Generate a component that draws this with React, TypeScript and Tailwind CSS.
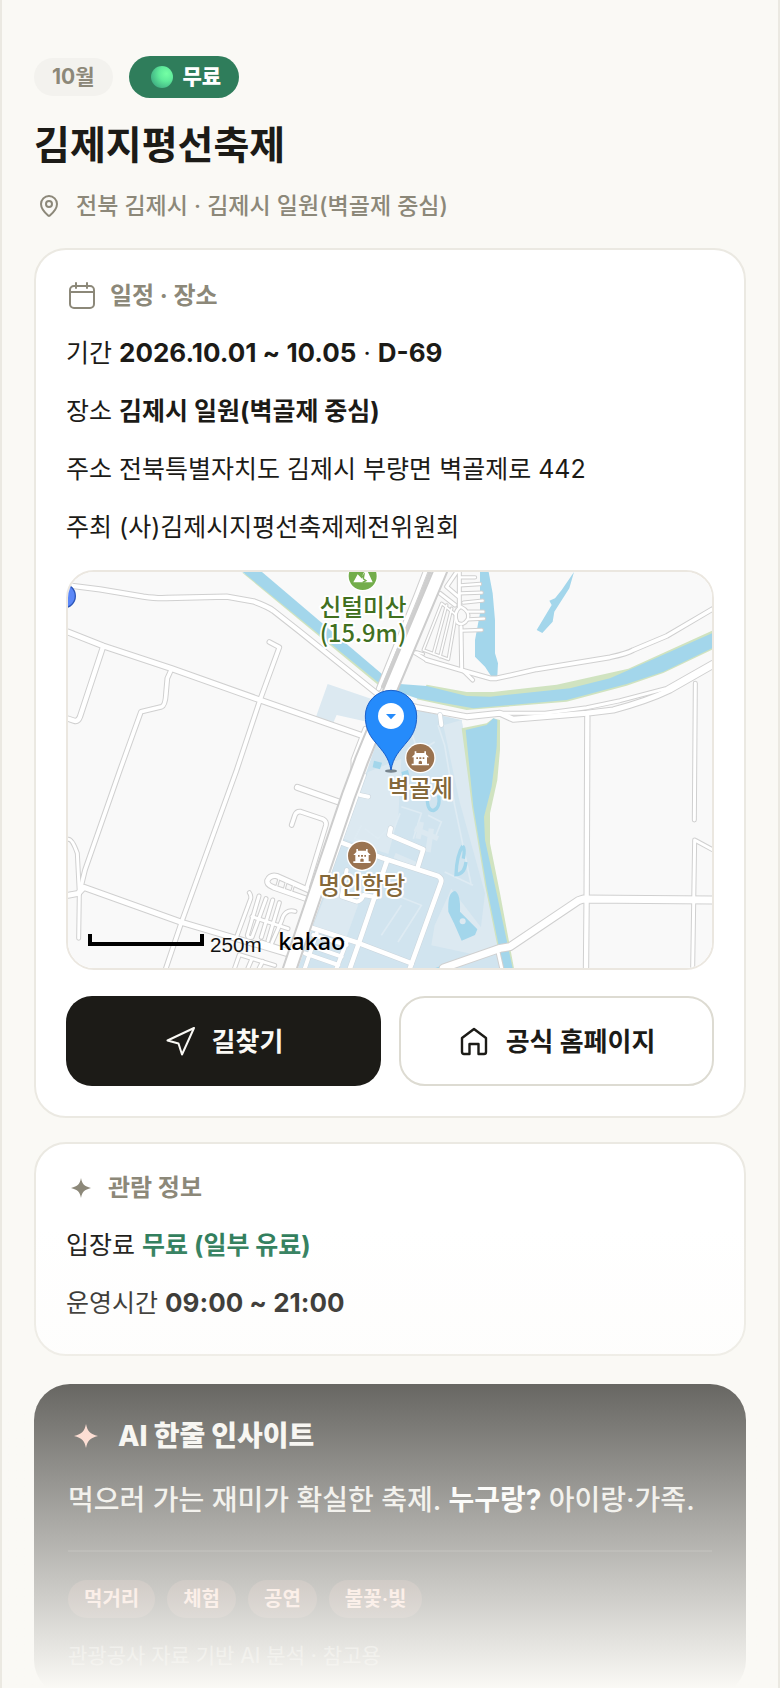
import { MapPin } from "lucide-react";

type Road = { d: string; w: number };

/* ================= MAP DATA ================= */

const lightRoads: Road[] = [
  { d: "M0 40L96 52L226 74Q270 80 296 78L476 74L556 88Q600 104 616 116L696 179L936 372", w: 18 },
  { d: "M106 222L36 434Q30 450 18 446L0 440", w: 18 },
  { d: "M311 290L298 319L294 364Q292 400 281 404L219 419L156 594L51 894L34 964", w: 16 },
  { d: "M604 210L634 226L576 384L506 594L341 1049L294 1188", w: 16 },
  { d: "M0 802Q12 798 28 844L34 964L32 1099", w: 14 },
  { d: "M0 180L106 222L311 290L576 384L886 492", w: 20 },
  { d: "M0 970L31 964L48 946L341 1051L676 1150", w: 20 },
  { d: "M688 646L818 692", w: 20 },
  { d: "M671 759L681 729Q686 717 698 719L766 742Q776 748 774 759L716 949", w: 16 },
  { d: "M721 954L626 912Q606 908 598 926Q596 938 616 946L736 988", w: 18 },
  { d: "M634 916L626 944M656 926L648 954M678 936L670 962", w: 8 },
  { d: "M544 962Q550 970 548 980L506 1094M573 972L538 1090Q540 1098 552 1096L594 980M614 984L580 1096M634 992L600 1106M681 1018Q650 1010 641 1046L612 1112", w: 14 },
  { d: "M552 1034L660 1070M580 1110L690 1146M500 1188L514 1148L620 1180M540 1188L552 1160M574 1188L584 1168", w: 14 },
  { d: "M1076 264L1186 296L1266 319L1286 319L1406 292L1626 256Q1680 244 1696 234L1796 192L1932 112", w: 16 },
  { d: "M1036 239L1076 264M1186 296L1214 324M1179 164L1181 289", w: 14 },
  { d: "M1174 0L1174 104M1166 0L1136 44L1171 74M1116 64L1161 99", w: 14 },
  { d: "M1176 16L1221 16M1176 40L1236 36M1176 64L1241 62M1186 92L1244 86M1201 119L1246 119M1201 142L1248 140M1181 176L1241 174", w: 12 },
  { d: "M1178 104Q1206 118 1200 140Q1186 164 1168 152Q1154 120 1178 104Z", w: 12 },
  { d: "M1121 94L1066 234L1141 262L1164 129ZM1136 99L1096 246M1151 109L1116 254M1066 246L1046 240", w: 10 },
  { d: "M980 390L1046 406L1196 434L1296 424L1336 442L1556 424L1636 414Q1740 386 1806 354L1932 282", w: 20 },
  { d: "M1296 424L1431 424L1556 407L1656 386L1796 349L1932 272", w: 14 },
  { d: "M1558 434L1556 964L1554 1188", w: 18 },
  { d: "M1882 334L1879 744", w: 14 },
  { d: "M1874 1188L1880 804L1932 832", w: 14 },
  { d: "M1291 1144L1301 1188", w: 14 },
  { d: "M1932 984L1546 981L1531 986L1326 1124L1296 1129L1126 1188", w: 26 },
  { d: "M1072 0L1045 70L932 350M892 470L856 564L856 600", w: 16 },
];

const parkRoads: Road[] = [
  { d: "M888 609L726 1064", w: 12 },
  { d: "M876 669L901 674", w: 12 },
  { d: "M821 812L946 859L1110 912Q1124 920 1118 934L1026 1188", w: 14 },
  { d: "M968 769L964 789L1066 832L1048 889", w: 14 },
  { d: "M958 864L874 1109L846 1189", w: 14 },
  { d: "M726 1066L874 1114L1031 1174", w: 14 },
  { d: "M836 894L821 974L866 989Q882 986 886 969L926 976", w: 12 },
  { d: "M736 1089L836 1119M721 1119L821 1154M711 1144L811 1179M746 1084L711 1188M836 1109L806 1188", w: 12 },
  { d: "M1116 428L1120 459", w: 12 },
];

const highway = "M1118 -6L971 344L881 564L841 672L664 1194";

const tags = ["먹거리", "체험", "공연", "불꽃·빛"];

/* ================= ICONS ================= */

function CalendarIcon() {
  return (
    <svg viewBox="0 0 32 32" className="size-8" fill="none" stroke="currentColor" strokeWidth="2" strokeLinecap="round">
      <rect x="4" y="6" width="24" height="22" rx="4" />
      <path d="M4 12H28M10 3V8M21 3V8" />
    </svg>
  );
}

function Sparkle({ className }: { className: string }) {
  return (
    <svg viewBox="0 0 24 24" className={className} fill="currentColor">
      <path d="M12 0C13.500 7.500 16 10 24 12C16 14 13.500 16.500 12 24C10.500 16.500 8 14 0 12C8 10 10.500 7.500 12 0Z" />
    </svg>
  );
}

function SendIcon() {
  return (
    <svg viewBox="0 0 32 32" className="size-8" fill="none" stroke="currentColor" strokeWidth="2" strokeLinejoin="round">
      <path d="M30 3L3.500 15.500L14.500 18.500L18 29.500Z" />
    </svg>
  );
}

function HomeIcon() {
  return (
    <svg viewBox="0 0 32 32" className="size-8" fill="none" stroke="currentColor" strokeWidth="2.400" strokeLinejoin="round">
      <path d="M4 13L16 4L28 13V27Q28 29 26 29H20.500V19H11.500V29H6Q4 29 4 27Z" />
    </svg>
  );
}

function PalaceBadge({ x, y }: { x: number; y: number }) {
  return (
    <g transform={`translate(${x} ${y})`}>
      <circle r="46" fill="#fff" />
      <circle r="42" fill="#9a7350" />
      <path d="M-26 -2L-17 -11V-20H-12V-15H12V-20H17V-11L26 -2ZM-20 -3H20V18H-20ZM-26 17H26V22H-26Z" fill="#fff" />
      <path d="M-12 -2h5v5h-5zM-3 -2h6v5h-6zM7 -2h5v5h-5zM-5 18V11Q0 6 5 11V18Z" fill="#9a7350" />
    </g>
  );
}

/* ================= MAP ================= */

function FestivalMap() {
  const label = {
    fontFamily: '"Noto Sans CJK KR", sans-serif',
    fontSize: 71,
    fontWeight: 500,
    textAnchor: "middle" as const,
    stroke: "#fff",
    strokeWidth: 12,
    strokeLinejoin: "round" as const,
    paintOrder: "stroke",
  };

  return (
    <svg viewBox="0 0 1932 1188" preserveAspectRatio="xMidYMid slice" className="block size-full" role="img" aria-label="지도">
      <rect width="1932" height="1188" fill="#f9f9f9" />

      {/* park */}
      <path d="M779 336L920 384L900 450L806 429L796 452L744 434Z" fill="#dce9f1" />
      <path d="M966 396L1181 444L1216 704L1310 1189H690Z" fill="#d1e4ef" />
      <path d="M900 600L1000 560L991 734L961 846L826 800ZM1126 460L1181 444L1216 704L1306 1150L1230 1140L1251 964L1175 690ZM736 1060L800 900L870 1000L830 1110ZM1100 1060L1150 950L1250 1080L1230 1150L1090 1120Z" fill="#dce9f1" />
      <path d="M1000 704L1060 724L1036 800M996 724L966 800M1110 460L1130 520L1160 700L1210 940M1030 480L1050 540L1100 510M960 960L1060 1000L990 1110M890 770L930 800L960 770M880 760L860 800L900 812M1000 1000L940 1090M1130 900L1215 940M1080 730L1120 750L1100 800" fill="none" stroke="#deebf3" strokeWidth="5" />
      <path d="M1040 770L1110 800M1060 750L1050 800M1090 770L1080 840M980 850L1050 880" fill="none" stroke="#dce9f1" strokeWidth="16" />

      {/* water */}
      <path d="M520 0L937 344L941 338L560 20Z" fill="#d0e3c0" />
      <path d="M524 0H582L956 318L941 340Z" fill="#a3d6eb" />
      <path d="M1076 338L1196 360L1276 360L1466 338L1681 290L1932 176V233L1786 303L1676 341L1496 389L1196 414L1046 382Z" fill="#d0e3c0" />
      <path d="M930 310L996 336L1076 342L1196 372L1266 374L1506 349L1626 319L1932 184V229L1786 299L1676 336L1496 384L1216 409L1046 379L960 350Z" fill="#a3d6eb" />
      <path d="M1236 0H1262L1274 64L1281 144V244L1290 274L1288 312H1269L1251 284L1221 254V204L1236 124Z" fill="#a3d6eb" />
      <path d="M1518 0L1481 54L1461 79L1444 86L1451 99L1406 174L1423 183L1454 149L1459 119L1504 49Z" fill="#a3d6eb" />
      <path d="M1181 469L1256 454L1276 439L1296 444V534L1288 624L1266 724V814L1296 964L1338 1189H1302L1252 944L1212 704Z" fill="#d0e3c0" />
      <path d="M1193 474L1256 459L1276 439L1288 444L1286 524L1271 644L1248 734L1251 804L1286 964L1334 1189H1306L1256 944L1216 704Z" fill="#a3d6eb" />
      <path d="M1161 957Q1178 966 1176 1019L1228 1072L1221 1089L1181 1106L1158 1054L1141 1019Q1138 960 1161 957Z" fill="#a3d6eb" />
      <path d="M1078 672Q1076 715 1096 716Q1118 708 1112 670M1184 822Q1166 850 1164 908Q1190 906 1194 870M1184 822Q1192 830 1186 860" fill="none" stroke="#a3d6eb" strokeWidth="10" />
      <path d="M918 566L942 572L936 592L914 586ZM1000 600L1020 594L1024 610L1004 616Z" fill="#a3d6eb" />
      <circle cx="1184" cy="1048" r="9" fill="#dce9f1" />
      <path d="M1100 1192L1292 1120" stroke="#a3d6eb" strokeWidth="6" />

      {/* roads */}
      <g fill="none" strokeLinecap="round" strokeLinejoin="round">
        {lightRoads.map((r) => (
          <path key={r.d} d={r.d} stroke="#d0d0d0" strokeWidth={r.w + 1} />
        ))}
        {lightRoads.map((r) => (
          <path key={r.d} d={r.d} stroke="#fff" strokeWidth={r.w - 5} />
        ))}
        {parkRoads.map((r) => (
          <path key={r.d} d={r.d} stroke="#cbd5dc" strokeWidth={r.w + 3} />
        ))}
        {parkRoads.map((r) => (
          <path key={r.d} d={r.d} stroke="#fff" strokeWidth={r.w} />
        ))}
        <path d="M1088 -6L1044 106L944 344" stroke="#cfcfcf" strokeWidth="10" />
        <path d={highway} stroke="#cdcdcd" strokeWidth="46" />
        <path d={highway} stroke="#fff" strokeWidth="34" />
      </g>

      {/* places */}
      <circle cx="-14" cy="72" r="36" fill="#5b87f7" stroke="#2c56b8" strokeWidth="4" />
      <circle cx="884" cy="12" r="46" fill="#fff" />
      <circle cx="884" cy="12" r="42" fill="#73ad4b" />
      <path d="M856 31L869 7L880 18L889 -2H899L914 31Z" fill="#fff" />
      <path d="M880 18L888 8L886 20L894 26L884 31" fill="none" stroke="#73ad4b" strokeWidth="4" />
      <text fill="#41701f" {...label}>
        <tspan x="885" y="133">신털미산</tspan>
        <tspan x="885" y="210">(15.9m)</tspan>
      </text>
      <PalaceBadge x={1057} y={558} />
      <PalaceBadge x={882} y={851} />
      <text x="1057" y="674" fill="#84683a" {...label}>벽골제</text>
      <text x="881" y="965" fill="#84683a" {...label}>명인학당</text>

      {/* marker */}
      <ellipse cx="969" cy="597" rx="18" ry="5" fill="#5f6b76" opacity="0.8" />
      <path
        d="M969 594C962 555 946 540 918 506C900 484 892 462 892 432A77 77 0 0 1 1046 432C1046 462 1038 484 1020 506C992 540 976 555 969 594Z"
        fill="#258bfb"
        stroke="#1a5fc8"
        strokeWidth="3"
      />
      <circle cx="969" cy="432" r="39" fill="#fff" />
      <path d="M954 426H984L969 442Z" fill="#258bfb" />

      {/* scale */}
      <path d="M66 1086V1116H402V1086" fill="none" stroke="#000" strokeWidth="12" />
      <text x="426" y="1139" fontFamily='"Liberation Sans", sans-serif' fontSize="62" fill="#111">250m</text>
      <text x="631" y="1134" fontFamily='"Noto Sans", sans-serif' fontSize="70" fontWeight="500" fill="#000">kakao</text>
    </svg>
  );
}

/* ================= PAGE ================= */

export default function App() {
  return (
    <div className="relative h-screen overflow-hidden border-x-2 border-[#ebe9e2] bg-[#faf9f5] px-8 pt-14 font-['Inter','Noto_Sans_CJK_KR',sans-serif] text-[#1c1b17]">
      {/* HEADER */}
      <header>
        <div className="flex items-center gap-4">
          <span className="flex h-[38px] items-center rounded-full bg-[#f3f2ee] px-[18px] text-[21px] font-bold text-[#8c8879]">
            10월
          </span>
          <span className="flex h-[42px] items-center gap-[10px] rounded-full bg-[#2f7d5b] pl-[22px] pr-[18px] text-[21px] font-extrabold text-white">
            <span className="size-[22px] rounded-full bg-[radial-gradient(circle_at_70%_35%,#74ffa4_0%,#5feb9b_35%,#43b585_75%,#4a9a90_100%)]" />
            무료
          </span>
        </div>
        <h1 className="mt-5 text-[39px] font-bold leading-[54px]">김제지평선축제</h1>
        <p className="mt-[18px] flex items-center gap-[15px] pl-[3px] text-[23px] font-medium leading-8 text-[#8c8879]">
          <MapPin size={24} strokeWidth={2} />
          전북 김제시 · 김제시 일원(벽골제 중심)
        </p>
      </header>

      <main>
        {/* SCHEDULE */}
        <section className="mt-[26px] rounded-[32px] border-2 border-[#ebe9e2] bg-white px-[30px] pb-[30px] pt-7">
          <h2 className="flex h-9 items-center gap-3 text-[24px] font-bold text-[#8c8879]">
            <CalendarIcon />
            일정 · 장소
          </h2>
          <div className="mt-4 space-y-3 text-[25px] leading-[46px]">
            <p>
              기간 <b className="text-[26px]">2026.10.01 ~ 10.05</b> · <b className="text-[26px]">D-69</b>
            </p>
            <p>
              장소 <b>김제시 일원(벽골제 중심)</b>
            </p>
            <p>주소 전북특별자치도 김제시 부량면 벽골제로 442</p>
            <p>주최 (사)김제시지평선축제제전위원회</p>
          </div>

          <div className="mt-5 h-[400px] overflow-hidden rounded-[28px] border-2 border-[#ebe7e0]">
            <FestivalMap />
          </div>

          <div className="mt-[26px] grid grid-cols-2 gap-[18px] text-[26px] font-bold">
            <button className="flex h-[90px] items-center justify-center gap-4 rounded-[26px] bg-[#1c1b17] text-[#faf9f5]">
              <SendIcon />
              길찾기
            </button>
            <button className="flex h-[90px] items-center justify-center gap-4 rounded-[26px] border-2 border-[#dddbd2] bg-white">
              <HomeIcon />
              공식 홈페이지
            </button>
          </div>
        </section>

        {/* VISIT INFO */}
        <section className="mt-6 rounded-[32px] border-2 border-[#ebe9e2] bg-white px-[30px] pb-7 pt-[26px]">
          <h2 className="flex h-9 items-center gap-3 text-[24px] font-bold text-[#8c8879]">
            <span className="flex w-[30px] justify-center">
              <Sparkle className="size-5" />
            </span>
            관람 정보
          </h2>
          <div className="mt-4 space-y-3 text-[25px] leading-[46px]">
            <p>
              입장료 <b className="text-[#2f7d5b]">무료 (일부 유료)</b>
            </p>
            <p>
              운영시간 <b className="text-[26px]">09:00 ~ 21:00</b>
            </p>
          </div>
        </section>

        {/* AI INSIGHT */}
        <section className="mt-7 rounded-[36px] bg-[#1c1b17] px-[34px] pb-6 pt-8 text-[#f5f4f0]">
          <h2 className="flex h-10 items-center gap-5 text-[28px] font-extrabold">
            <span className="flex w-[30px] justify-end">
              <Sparkle className="size-6 text-[#ffc8b8]" />
            </span>
            AI 한줄 인사이트
          </h2>
          <p className="mt-5 text-[28px] font-medium leading-[48px] text-[#e8e7e2]">
            먹으러 가는 재미가 확실한 축제. <b className="text-white">누구랑?</b> 아이랑·가족.
          </p>
          <hr className="mt-[26px] border-t-2 border-white/10" />
          <ul className="mt-7 flex gap-3 text-[20px] font-semibold text-[#ffc8b8]">
            {tags.map((tag) => (
              <li key={tag} className="flex h-[38px] items-center rounded-full bg-[#ffa08a]/20 px-4">
                {tag}
              </li>
            ))}
          </ul>
          <p className="mt-[22px] text-[21px] leading-8 text-white/50">관광공사 자료 기반 AI 분석 · 참고용</p>
        </section>
      </main>

      {/* FADE */}
      <div className="pointer-events-none absolute inset-x-0 bottom-0 h-[460px] bg-linear-to-b from-[#faf9f5]/0 to-[#faf9f5]" />
    </div>
  );
}
